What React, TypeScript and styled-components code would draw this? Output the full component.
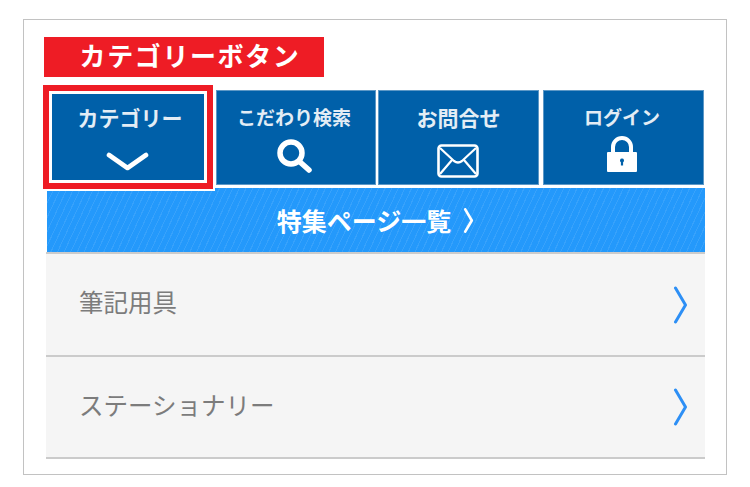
import React from 'react'
import styled, { createGlobalStyle } from 'styled-components'

const GlobalStyle = createGlobalStyle`
  html, body {
    margin: 0;
    padding: 0;
    background: #fff;
  }
  body {
    font-family: "Noto Sans CJK JP", "Noto Sans", sans-serif;
  }
`

const Frame = styled.div`
  box-sizing: border-box;
  width: 704px;
  height: 456px;
  margin: 19px 0 0 23px;
  padding: 17px 21px 0 20px;
  border: 1px solid #c2c2c2;
`

const Caption = styled.div`
  box-sizing: border-box;
  width: 280px;
  height: 40px;
  display: flex;
  align-items: center;
  justify-content: center;
  padding: 0 0 5px 12px;
  background: #ee1c25;
  color: #fff;
  font-size: 26px;
  font-weight: 700;
  letter-spacing: 1.6px;
`

const TileRow = styled.div`
  display: grid;
  grid-template-columns: 166px 163px 163px 165px;
  height: 95px;
  margin: 13px 1px 0 3px;
`

const Tile = styled.div<{ $inset: number; $shift: number }>`
  position: relative;
  display: flex;
  flex-direction: column;
  align-items: center;
  box-sizing: border-box;
  margin-left: ${p => p.$inset}px;
  padding: 14px ${p => p.$shift}px 0 0;
  background: #0060a9;
  border: 1px solid #5d98c6;
`

const TileLabel = styled.span<{ $size: number }>`
  height: 24px;
  line-height: 24px;
  color: #e3edf5;
  font-size: ${p => p.$size}px;
  font-weight: 700;
  white-space: nowrap;
`

const IconSlot = styled.span<{ $top: number; $nudge: number }>`
  display: block;
  line-height: 0;
  margin: ${p => p.$top}px ${p => p.$nudge}px 0 0;
`

const Highlight = styled.span`
  position: absolute;
  top: -6px;
  left: -5px;
  right: -1px;
  bottom: -5px;
  border: 6px solid #ee1c25;
  box-shadow: inset 0 0 0 3px #fff, 2px 2px 0 0 #fff;
`

const Band = styled.div`
  display: flex;
  align-items: center;
  justify-content: center;
  gap: 11px;
  height: 64px;
  margin: 3px 0 0 3px;
  color: #fff;
  font-size: 25px;
  font-weight: 700;
  background-color: #2499fb;
  background-image: repeating-linear-gradient(
    115deg,
    rgba(255, 255, 255, 0.09) 0 1px,
    transparent 1px 6px
  );
`

const List = styled.div`
  margin: 0 0 0 2px;
  border-top: 2px solid #cbcbcb;
`

const Row = styled.div<{ $height: number }>`
  box-sizing: border-box;
  display: flex;
  align-items: center;
  justify-content: space-between;
  height: ${p => p.$height}px;
  padding: 0 17px 0 33px;
  background: #f5f5f5;
  border-bottom: 2px solid #cbcbcb;
  color: #7c7c7c;
  font-size: 24.5px;
  font-weight: 400;
`

const RowLabel = styled.span`
  margin-bottom: 6px;
`

const ChevronDown = () => (
  <svg width="43" height="20" viewBox="0 0 43 20">
    <path d="M3 3 L21.5 16 L40 3" fill="none" stroke="#fff" strokeWidth="4.6" strokeLinecap="round" strokeLinejoin="round" />
  </svg>
)

const SearchIcon = () => (
  <svg width="36" height="36" viewBox="0 0 36 36">
    <circle cx="15" cy="15" r="11" fill="none" stroke="#fff" strokeWidth="5.5" />
    <path d="M24 24 L33 32" fill="none" stroke="#fff" strokeWidth="5.5" strokeLinecap="round" />
  </svg>
)

const MailIcon = () => (
  <svg width="42" height="34" viewBox="0 0 42 34">
    <rect x="1.5" y="1.5" width="39" height="31" rx="3" fill="none" stroke="#fff" strokeWidth="2.6" />
    <path d="M3 4 L17 17 Q21 20 25 17 L39 4 M3 30 L15 16 M39 30 L27 16" fill="none" stroke="#fff" strokeWidth="2.2" />
  </svg>
)

const LockIcon = () => (
  <svg width="32" height="37" viewBox="0 0 32 37">
    <path d="M7 17 V11 a9 9 0 0 1 18 0 V17" fill="none" stroke="#fff" strokeWidth="4" />
    <path
      fillRule="evenodd"
      fill="#fff"
      d="M2 16 H30 a1 1 0 0 1 1 1 V35 a1 1 0 0 1 -1 1 H2 a1 1 0 0 1 -1 -1 V17 a1 1 0 0 1 1 -1 Z M16 22.5 a2 2 0 0 0 -1.1 3.7 V29.5 h2.2 V26.2 A2 2 0 0 0 16 22.5 Z"
    />
  </svg>
)

const ChevronRight = ({ color, width, height, weight }: { color: string; width: number; height: number; weight: number }) => (
  <svg width={width} height={height} viewBox="0 0 14 38">
    <path d="M2 2 L12 19 L2 36" fill="none" stroke={color} strokeWidth={weight} strokeLinecap="round" strokeLinejoin="round" />
  </svg>
)

const tiles = [
  { label: 'カテゴリー', size: 21, inset: 0, shift: 0, nudge: 6, top: 23, icon: <ChevronDown />, active: true },
  { label: 'こだわり検索', size: 19, inset: 3, shift: 4, nudge: 0, top: 9, icon: <SearchIcon /> },
  { label: 'お問合せ', size: 21, inset: 2, shift: 0, nudge: 2, top: 15, icon: <MailIcon /> },
  { label: 'ログイン', size: 19, inset: 4, shift: 3, nudge: 0, top: 7, icon: <LockIcon /> }
]

const rows = [
  { label: '筆記用具', height: 103 },
  { label: 'ステーショナリー', height: 102 }
]

const App = () => (
  <>
    <GlobalStyle />
    <Frame>
      <Caption>カテゴリーボタン</Caption>
      <TileRow>
        {tiles.map(tile => (
          <Tile key={tile.label} $inset={tile.inset} $shift={tile.shift}>
            <TileLabel $size={tile.size}>{tile.label}</TileLabel>
            <IconSlot $top={tile.top} $nudge={tile.nudge}>{tile.icon}</IconSlot>
            {tile.active && <Highlight />}
          </Tile>
        ))}
      </TileRow>
      <Band>
        <span>特集ページ一覧</span>
        <ChevronRight color="#fff" width={13} height={25} weight={4} />
      </Band>
      <List>
        {rows.map(row => (
          <Row key={row.label} $height={row.height}>
            <RowLabel>{row.label}</RowLabel>
            <ChevronRight color="#2d8ff5" width={15} height={38} weight={3} />
          </Row>
        ))}
      </List>
    </Frame>
  </>
)

export default App
